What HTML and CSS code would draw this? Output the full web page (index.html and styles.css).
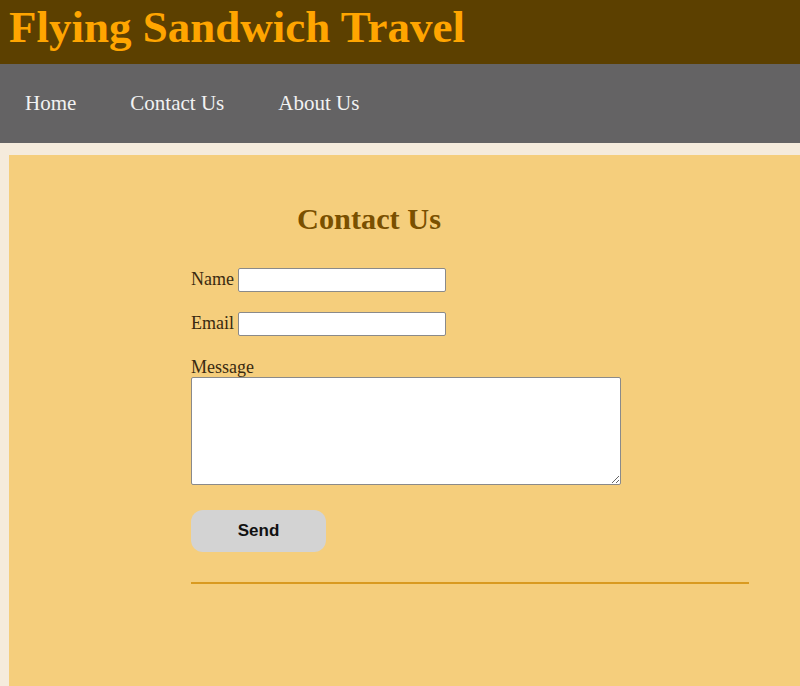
FILE: index.html
```html
<!DOCTYPE html>
<html>
<head>
<meta charset="utf-8">
<title>Flying Sandwich Travel</title>
<link rel="stylesheet" href="styles.css">
</head>
<body>
<header class="site-header">
  <h1 class="site-title">Flying Sandwich Travel</h1>
</header>
<nav class="site-nav">
  <a href="#" class="nav-link">Home</a>
  <a href="#" class="nav-link">Contact Us</a>
  <a href="#" class="nav-link">About Us</a>
</nav>
<div class="page">
  <main class="main">
    <h2 class="main-title">Contact Us</h2>
    <form class="contact-form">
      <div class="row">
        <label for="name">Name</label>
        <input id="name" type="text" class="field">
      </div>
      <div class="row row-last">
        <label for="email">Email</label>
        <input id="email" type="text" class="field">
      </div>
      <div class="row-col">
        <label for="msg">Message</label>
        <textarea id="msg" class="message"></textarea>
      </div>
      <button type="button" class="send">Send</button>
    </form>
    <hr class="rule">
  </main>
</div>
</body>
</html>
```
FILE: styles.css
```css
html, body {
  margin: 0;
  padding: 0;
}
body {
  background: #f5ebdc;
  font-family: "Liberation Serif", "Times New Roman", serif;
  height: 686px;
  overflow: hidden;
}
.site-header {
  background: #5c4000;
  height: 64px;
  padding: 0 9px;
}
.site-title {
  margin: 0;
  color: #ffa500;
  font-size: 45px;
  line-height: 54px;
  font-weight: bold;
}
.site-nav {
  background: #646364;
  height: 79px;
  display: flex;
  align-items: center;
  padding-left: 25px;
  gap: 54px;
}
.nav-link {
  color: #f2f2f2;
  text-decoration: none;
  font-size: 21px;
}
.page {
  padding: 12px 0 0 9px;
}
.main {
  box-sizing: border-box;
  background: #f5ce7c;
  height: 531px;
  padding: 44px 0 0 182px;
}
.main-title {
  margin: 0 0 29px 0;
  width: 356px;
  text-align: center;
  color: #7a5000;
  font-size: 30.3px;
  line-height: 40px;
}
.contact-form {
  display: flex;
  flex-direction: column;
  align-items: flex-start;
  color: #3a2a10;
  font-size: 18px;
}
.row {
  display: flex;
  align-items: center;
  gap: 4px;
  margin-bottom: 20px;
  height: 24px;
}
.row-last {
  margin-bottom: 21px;
}
.row label {
  position: relative;
  top: -1px;
}
.row-col {
  display: flex;
  flex-direction: column;
}
.row-col label {
  line-height: 20px;
}
.field {
  width: 208px;
  height: 24px;
  box-sizing: border-box;
  border: 1px solid #8a8a8a;
  border-radius: 2px;
  background: #fff;
}
.message {
  width: 430px;
  height: 108px;
  box-sizing: border-box;
  border: 1px solid #8a8a8a;
  border-radius: 2px;
  background: #fff;
  margin: 0;
}
.send {
  margin-top: 25px;
  width: 135px;
  height: 42px;
  border: none;
  border-radius: 12px;
  background: #d3d3d3;
  font-family: "Liberation Sans", Arial, sans-serif;
  font-weight: bold;
  font-size: 17px;
  color: #111;
}
.rule {
  margin: 30px 0 0 0;
  width: 558px;
  border: none;
  border-top: 2px solid #d99a20;
}
```
